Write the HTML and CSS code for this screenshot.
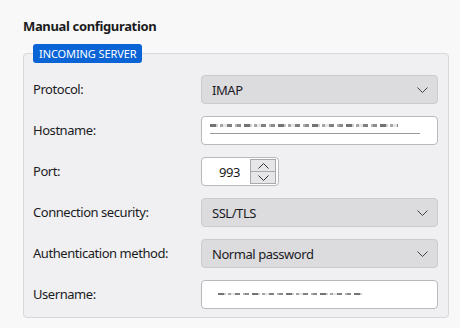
FILE: index.html
```html
<!DOCTYPE html>
<html>
<head>
<meta charset="utf-8">
<link rel="stylesheet" href="styles.css">
</head>
<body>
<div class="page">
  <h1 class="title">Manual configuration</h1>
  <fieldset class="group">
    <legend class="badge">INCOMING SERVER</legend>
    <div class="grid">
      <label class="lbl">Protocol:</label>
      <div class="select"><span>IMAP</span><svg class="chev" width="11" height="6" viewBox="0 0 11 6"><path d="M0.5 0.5 L5.5 5.5 L10.5 0.5" fill="none" stroke="#444" stroke-width="1"/></svg></div>

      <label class="lbl">Hostname:</label>
      <div class="input host"><span class="smudge s1"></span><span class="uline"></span></div>

      <label class="lbl">Port:</label>
      <div class="portrow">
        <div class="input port">
          <span class="num">993</span>
          <div class="spin">
            <div class="sb"><svg width="11" height="6" viewBox="0 0 11 6"><path d="M0.5 5.5 L5.5 0.5 L10.5 5.5" fill="none" stroke="#333" stroke-width="1"/></svg></div>
            <div class="sb"><svg width="11" height="6" viewBox="0 0 11 6"><path d="M0.5 0.5 L5.5 5.5 L10.5 0.5" fill="none" stroke="#333" stroke-width="1"/></svg></div>
          </div>
        </div>
      </div>

      <label class="lbl">Connection security:</label>
      <div class="select"><span>SSL/TLS</span><svg class="chev" width="11" height="6" viewBox="0 0 11 6"><path d="M0.5 0.5 L5.5 5.5 L10.5 0.5" fill="none" stroke="#444" stroke-width="1"/></svg></div>

      <label class="lbl">Authentication method:</label>
      <div class="select"><span>Normal password</span><svg class="chev" width="11" height="6" viewBox="0 0 11 6"><path d="M0.5 0.5 L5.5 5.5 L10.5 0.5" fill="none" stroke="#444" stroke-width="1"/></svg></div>

      <label class="lbl">Username:</label>
      <div class="input user"><span class="smudge s2"></span></div>
    </div>
  </fieldset>
</div>
</body>
</html>
```
FILE: styles.css
```css
html, body {
  margin: 0;
  padding: 0;
  background: #f8f8f8;
}
body {
  font-family: "Noto Sans", "Open Sans", sans-serif;
  font-size: 13px;
  letter-spacing: -0.45px;
  color: #1b1b1d;
}
.page {
  padding: 17px 13px 0 23px;
}
.title {
  margin: 0 0 9px 0;
  font-size: 13px;
  font-weight: 700;
  line-height: 18px;
  letter-spacing: -0.35px;
}
.group {
  margin: 0;
  width: 406px;
  padding: 0 9px 8px 9px;
  border: 1px solid #d8d8dc;
  border-radius: 4px;
  background: #f0f0f3;
}
.badge {
  padding: 0 6px;
  background: #0a64d6;
  color: #fff;
  font-size: 11px;
  line-height: 19px;
  height: 19px;
  border-radius: 3px;
  letter-spacing: -0.1px;
}
.grid {
  margin-top: 12px;
  display: grid;
  grid-template-columns: 168px 237px;
  row-gap: 12px;
  align-items: center;
}
.lbl {
  line-height: 29px;
}
.select {
  height: 27px;
  border: 1px solid #cbcbcf;
  border-radius: 4px;
  background: #dcdcdf;
  display: flex;
  align-items: center;
  justify-content: space-between;
  padding: 0 9px 0 10px;
}
.chev {
  display: block;
}
.input {
  height: 27px;
  border: 1px solid #b9b9bd;
  border-radius: 4px;
  background: #fff;
  position: relative;
}
.smudge {
  position: absolute;
  left: 8px;
  top: 9px;
  height: 3px;
  background: repeating-linear-gradient(90deg, #444 0 6px, #bbb 6px 8px, transparent 8px 10px, #888 10px 13px, #ddd 13px 17px, #555 17px 22px, transparent 22px 25px, #999 25px 27px, #666 27px 31px, transparent 31px 34px);
  opacity: 0.75;
}
.s1 { width: 188px; top: 7px; }
.s2 { width: 146px; left: 16px; top: 12px; height: 2px; }
.uline {
  position: absolute;
  left: 8px;
  top: 16px;
  width: 210px;
  height: 1px;
  background: #9a9a9e;
}
.portrow {
  display: flex;
}
.port {
  width: 76px;
  display: flex;
  align-items: center;
  justify-content: flex-end;
  padding-right: 2px;
  box-sizing: content-box;
  width: 74px;
}
.num {
  margin-right: 10px;
}
.spin {
  width: 26px;
  height: 25px;
  display: flex;
  flex-direction: column;
  border: 1px solid #a9a9ad;
  box-sizing: border-box;
}
.sb {
  flex: 1;
  background: #e6e6e9;
  display: flex;
  align-items: center;
  justify-content: center;
}
.sb + .sb {
  border-top: 1px solid #a9a9ad;
}
.sb svg { display: block; }
```
